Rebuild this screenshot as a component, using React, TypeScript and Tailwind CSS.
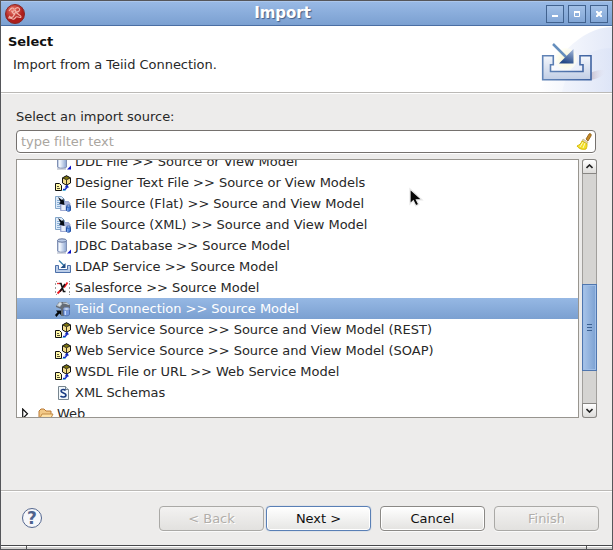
import React from "react";

type IconName = "db" | "web" | "file" | "ldap" | "sales" | "teiid" | "schema";

function DbIcon() {
  return (
    <svg width="16" height="16" viewBox="0 0 16 16">
      <path d="M2.500 2.500v10.500c0 1.600 9 1.600 9 0V2.500" fill="url(#cyl)" stroke="#8090b4" />
      <ellipse cx="7" cy="2.500" rx="4.500" ry="1.700" fill="#b9cae6" stroke="#66759b" />
      <path d="M4.500 5v8" stroke="#f3f7fd" />
      <path d="M2 15h9" stroke="#a5adc0" />
      <path d="M16 11.500v4h-4z" fill="#0b12c4" />
    </svg>
  );
}

function WebIcon() {
  return (
    <svg width="16" height="16" viewBox="0 0 16 16">
      <path d="M7.500 3 11.500.7 15.500 3v5L11.500 10.200 7.500 8z" fill="#f2dc8c" stroke="#111" />
      <path d="M7.500 2.900 11.500 1l4 1.900-4 1.800z" fill="#7c7408" stroke="#222" strokeWidth=".9" />
      <path d="M11.500 5v5" stroke="#3b3417" />
      <path d="M.5 8.500h4l2 2v5h-6z" fill="#fff8a8" stroke="#111" />
      <path d="M2 11.500h2M2 13.500h3" stroke="#555037" />
      <path d="M8 14.500h2l2-2v-2" fill="none" stroke="#1630c8" strokeWidth="1.400" />
      <path d="m9.500 12.500 2.500-3 2 3z" fill="#1025b8" />
      <path d="M7.500 15.500h3" stroke="#56b6dc" />
    </svg>
  );
}

function FileIcon() {
  return (
    <svg width="16" height="16" viewBox="0 0 16 16">
      <path d="M.5.500h6l3 3v9h-9z" fill="#dceafa" stroke="#82a5c8" />
      <path d="M2 4.500h5M2 6.500h5M2 8.500h5M2 10.500h4" stroke="#86add3" />
      <path d="m5.500 8 2-2.500h6l1.500 2v7H5.500z" fill="#a9b4dc" stroke="#8794c4" strokeWidth=".7" />
      <path d="M6.500 9h4v5h-4z" fill="#e9eefa" />
      <path d="m3 1 4 3 1.500-1.500L9.500 9 4 7.500 5.500 6z" fill="#080d16" />
      <path d="M11.500 10v4.300c0 1.200 4 1.200 4 0V10" fill="#477ad2" stroke="#2452a6" />
      <ellipse cx="13.500" cy="10" rx="2" ry="1" fill="#b9d2f5" stroke="#3d64ae" />
      <path d="M12.800 12v3" stroke="#8cb4f0" />
    </svg>
  );
}

function LdapIcon() {
  return (
    <svg width="16" height="16" viewBox="0 0 16 16">
      <path d="M.5 6.500h3v4h9v-4h3v7H.5z" fill="#bbcde8" stroke="#4c70a9" />
      <path d="m4 1.500 5 5" stroke="#337dab" strokeWidth="1.200" />
      <path d="M10.500 4v5h-5z" fill="#224e86" />
    </svg>
  );
}

function SalesIcon() {
  return (
    <svg width="16" height="16" viewBox="0 0 16 16">
      <path d="M1 1.500h1M14 1.500h1M1 14.500h1M14 14.500h1M.5 3v2M.5 7v2M.5 11v2M14.500 3v2M14.500 7v2M14.500 11v2" stroke="#9a9a9a" />
      <path d="M12.500 2.500 9 7.500M6.500 9.500l-4 4" fill="none" stroke="#f01820" strokeWidth="1.800" />
      <path d="M2 3.500h3" stroke="#f32b30" strokeWidth="1.300" />
      <path d="M4.500 3.500h1.500l2.500 8h2M10 4 5 11.500" fill="none" stroke="#151515" strokeWidth="1.600" />
    </svg>
  );
}

function TeiidIcon() {
  return (
    <svg width="16" height="16" viewBox="0 0 16 16">
      <path d="m1 5 3-4h7l4 3v5h-3V7H9v8H6V8L1 6z" fill="#656c76" />
      <path d="M2 4.500 5 1l2 1.500L5 5.500zm6-2.500h4l2 2" fill="#dce4ea" stroke="#b3bdc4" />
      <path d="M8.500 8v5c0 2.400 6 2.400 6 0V8" fill="#7497dd" stroke="#506fae" />
      <ellipse cx="11.500" cy="8" rx="3" ry="1.400" fill="#c8d9f2" stroke="#7390c8" />
      <path d="M10.300 10v4" stroke="#ccdfff" strokeWidth="1.300" />
      <path d="m0 14 2.500-2.700L1 9.500h5V14l-1.700-1.500L1.500 16z" fill="#050708" />
    </svg>
  );
}

function SchemaIcon() {
  return (
    <svg width="16" height="16" viewBox="0 0 16 16">
      <path d="M3.500 1.500h7l3 3v10h-10z" fill="#f2f8fc" stroke="#77858f" />
      <path d="M10.500 1.500v3h3" fill="#d4e2e8" stroke="#77858f" />
      <path d="M10.500 5.500c-1-1.500-4.500-1.500-4.500.500 0 2.300 5 1.600 5 4 0 2.500-4 2.500-5.500 1" fill="none" stroke="#183a81" strokeWidth="1.600" />
    </svg>
  );
}

const icons: Record<IconName, () => React.JSX.Element> = {
  db: DbIcon, web: WebIcon, file: FileIcon, ldap: LdapIcon,
  sales: SalesIcon, teiid: TeiidIcon, schema: SchemaIcon,
};

const rows: { icon: IconName; label: string; selected?: boolean }[] = [
  { icon: "db", label: "DDL File >> Source or View Model" },
  { icon: "web", label: "Designer Text File >> Source or View Models" },
  { icon: "file", label: "File Source (Flat) >> Source and View Model" },
  { icon: "file", label: "File Source (XML) >> Source and View Model" },
  { icon: "db", label: "JDBC Database >> Source Model" },
  { icon: "ldap", label: "LDAP Service >> Source Model" },
  { icon: "sales", label: "Salesforce >> Source Model" },
  { icon: "teiid", label: "Teiid Connection >> Source Model", selected: true },
  { icon: "web", label: "Web Service Source >> Source and View Model (REST)" },
  { icon: "web", label: "Web Service Source >> Source and View Model (SOAP)" },
  { icon: "web", label: "WSDL File or URL >> Web Service Model" },
  { icon: "schema", label: "XML Schemas" },
];

function TitleBar() {
  const box = "flex h-[18px] w-[18px] items-center justify-center border border-[#41628f] bg-linear-to-b from-[#a2c0e7] to-[#82a6d6]";
  return (
    <div className="flex h-[25px] shrink-0 items-center border-t border-b border-t-[#abc6eb] border-b-[#4a6ea3] bg-linear-to-b from-[#98b9e5] to-[#7ba0d1] pl-1 pr-1">
      <svg width="20" height="20" viewBox="0 0 20 20">
        <circle cx="10" cy="10" r="9.500" fill="url(#ball)" stroke="#892725" />
        <path d="M4 7c2-3 4-4 5-2s-1 3-3 2m4-2c3-3 6 0 4 2s-5 0-3-1M4 12c2 2 4 2 5-1s2-3 4-1 3 1 3 3M3 14c3-1 4 2 6 1s1-3 4-2 3 0 3 0M7 8l3 3" fill="none" stroke="#f2b5aa" strokeWidth="1.100" />
      </svg>
      <div className="flex-1 pr-[6px] pb-[2px] text-center text-[15px] leading-[20px] font-bold text-white [text-shadow:1px_1px_1px_#465f86]">Import</div>
      <div className="flex gap-1">
        <div className={box}><svg width="6" height="6"><path d="M0 5h6" stroke="#fff" strokeWidth="2" /></svg></div>
        <div className={box}><svg width="6" height="6"><path d="M.5 1h5v4.500h-5z" fill="none" stroke="#fff" /><path d="M0 1h6" stroke="#fff" strokeWidth="2" /></svg></div>
        <div className={box}><svg width="6" height="6"><path d="m0 0 6 6M6 0 0 6" stroke="#fff" strokeWidth="2.200" /></svg></div>
      </div>
    </div>
  );
}

function ImportBanner() {
  return (
    <svg className="shrink-0" width="75" height="66" viewBox="0 0 75 66">
      <defs>
        <linearGradient id="wash" x1="0" x2="1"><stop stopColor="#fff" /><stop offset="1" stopColor="#e3e9f8" /></linearGradient>
        <radialGradient id="glow"><stop stopColor="#fbf7ca" /><stop offset="1" stopColor="#fffef3" stopOpacity=".6" /></radialGradient>
        <linearGradient id="wash2" x1="0" x2="1"><stop stopColor="#eef2fb" /><stop offset="1" stopColor="#dae2f6" /></linearGradient>
        <linearGradient id="shade"><stop stopColor="#bdb2c0" /><stop offset="1" stopColor="#e6e6f4" stopOpacity="0" /></linearGradient>
        <linearGradient id="tray" x1="0" y1="0" x2="0" y2="1"><stop stopColor="#f4f7fc" /><stop offset="1" stopColor="#c1cee5" /></linearGradient>
        <linearGradient id="head" x1="1" y1="0" x2=".6" y2="1"><stop stopColor="#a8bddd" /><stop offset="1" stopColor="#254988" /></linearGradient>
        <linearGradient id="edge" x1="0" x2="1"><stop stopColor="#6285b7" /><stop offset="1" stopColor="#3f63a1" /></linearGradient>
      </defs>
      <path d="M2 66C14 36 43 1 75 1v65z" fill="url(#wash)" />
      <path d="M25 66c7-32 29-44 50-44v44z" fill="url(#wash2)" opacity=".6" />
      <circle cx="29" cy="33" r="11" fill="url(#glow)" />
      <path d="M53 47c10-4 18-4 16-1S60 54 51 54z" fill="url(#shade)" />
      <path d="M5.700 29.700h10.600v9h-2.800v6.800h32.500v-6.800h-3v-9h11v24H5.700z" fill="url(#tray)" stroke="url(#edge)" strokeWidth="1.600" />
      <path d="m16 18 13 13" stroke="#668fbd" strokeWidth="2.500" />
      <path d="M36.500 23v14.500H22z" fill="url(#head)" />
    </svg>
  );
}

function Arrow({ down = false }: { down?: boolean }) {
  return (
    <div className={`flex h-[15px] shrink-0 items-center justify-center border border-[#888683] bg-linear-to-b from-white to-[#dddcda] ${down ? "rounded-b-[3px]" : "rounded-t-[3px]"}`}>
      <svg width="7" height="5"><path d={down ? "M.5 1 3.500 4l3-3" : "M.5 4l3-3 3 3"} fill="none" stroke="#222" strokeWidth="1.600" /></svg>
    </div>
  );
}

function Button({ label, kind = "normal" }: { label: string; kind?: "normal" | "primary" | "disabled" }) {
  const tone = {
    normal: "border-[#8b8986] from-white to-[#e3e2e0] text-[#101010] shadow-[0_1px_0_#fafafa,inset_0_0_0_1px_#fff]",
    primary: "border-[#597fb5] from-white to-[#e6e6e4] text-[#101010] shadow-[0_0_1px_#7296c7,inset_0_0_0_1px_#fff]",
    disabled: "border-[#aaa9a6] from-[#f3f2f1] to-[#e2e1df] text-[#b1aeaa] shadow-[0_1px_0_#fafafa] [text-shadow:1px_1px_0_#fff]",
  }[kind];
  return <div className={`flex h-[25px] w-[105px] items-center justify-center rounded-[4px] border bg-linear-to-b ${tone}`}>{label}</div>;
}

export default function App() {
  return (
    <div className="flex h-[550px] w-[613px] flex-col overflow-hidden border border-[#55565a] bg-[#edeceb] font-['DejaVu_Sans',sans-serif] text-[13px] leading-[21px] tracking-[-0.03px] text-[#282828]">
      <svg className="absolute h-0 w-0">
        <defs>
          <linearGradient id="cyl"><stop stopColor="#afc0dc" /><stop offset=".3" stopColor="#edf3fb" /><stop offset="1" stopColor="#8ba4d0" /></linearGradient>
          <radialGradient id="ball" cx=".4" cy=".3"><stop stopColor="#ea7768" /><stop offset="1" stopColor="#ad1e1c" /></radialGradient>
        </defs>
      </svg>
      <TitleBar />
      <header className="flex h-[68px] shrink-0 justify-between border-b border-b-white bg-white shadow-[inset_0_-1px_0_#bbb9b6]">
        <div className="pl-[7px] pt-[5px]">
          <div className="font-bold text-[#111]">Select</div>
          <div className="mt-[2px] pl-[5px]">Import from a Teiid Connection.</div>
        </div>
        <ImportBanner />
      </header>
      <main className="flex h-[396px] shrink-0 flex-col px-[15px] pt-[12px]">
        <div className="h-[24px]">Select an import source:</div>
        <div className="flex h-[23px] w-[580px] shrink-0 items-center justify-between rounded-[4px] border border-[#75716e] bg-white pl-1 pr-[3px] text-[#aaa69f] shadow-[0_1px_0_#fff]">
          <span>type filter text</span>
          <svg width="16" height="17" viewBox="0 0 16 17">
            <path d="m10 6 3-5c1-1 3 0 2 2l-3 5z" fill="#c68a24" stroke="#8a5b18" strokeWidth=".8" />
            <path d="m7 6 5 3-1 2-5-3z" fill="#e3d4a3" stroke="#b9a064" strokeWidth=".5" />
            <path d="M6 8c-1 3-3 4-5 5 2 3 6 4 9 3 1-2 1-3 1-5z" fill="#f3df28" stroke="#d4b90d" />
            <path d="m7 9-3 5m5-4-2 5" stroke="#fffac0" />
          </svg>
        </div>
        <div className="mt-[6px] flex h-[259px] gap-[3px]">
          <div className="w-[563px] overflow-hidden border border-[#98958f] bg-white">
            <div className="-mt-[9px]">
              {rows.map((row) => {
                const Icon = icons[row.icon];
                return (
                  <div key={row.label} className={`flex h-[21px] items-center pl-[38px] ${row.selected ? "bg-linear-to-b from-[#96b8e4] to-[#7ba0d1] text-white" : ""}`}>
                    <Icon />
                    <span className="pl-1 whitespace-nowrap">{row.label}</span>
                  </div>
                );
              })}
              <div className="flex h-[21px] items-center pl-[5px]">
                <svg width="7" height="12"><path d="M.7 1v9.500L5.500 5.700z" fill="#fff" stroke="#111" strokeWidth="1.200" /></svg>
                <svg className="ml-[9px]" width="16" height="16" viewBox="0 0 16 16">
                  <path d="M1 14V5l2-2h3l2 2h5v9z" fill="#f2c987" stroke="#b87834" />
                  <path d="m1 14 3-6h11l-3 6z" fill="#ffe2a7" stroke="#c28a45" />
                </svg>
                <span className="pl-[3px]">Web</span>
              </div>
            </div>
          </div>
          <div className="flex w-[15px] flex-col rounded-[3px] border-x border-[#a19f9c] bg-[#d5d4d2]">
            <div className="-mx-px"><Arrow /></div>
            <div className="h-[110px]" />
            <div className="-mx-px flex h-[87px] flex-col items-center justify-center gap-[2px] border border-[#4f76ae] bg-linear-to-r from-[#a8c4e9] to-[#7ca1d2] shadow-[inset_0_0_0_1px_#9fbee7]">
              <div className="h-px w-[5px] bg-[#3c6192]" />
              <div className="h-px w-[5px] bg-[#3c6192]" />
              <div className="h-px w-[5px] bg-[#3c6192]" />
            </div>
            <div className="flex-1" />
            <div className="-mx-px"><Arrow down /></div>
          </div>
        </div>
      </main>
      <footer className="flex h-[55px] shrink-0 items-center border-t border-[#bbb9b6] pl-[21px] shadow-[inset_0_1px_0_#fff]">
        <div className="flex h-5 w-5 items-center justify-center rounded-full border border-[#54678f] bg-[#f6f7fa] text-[17px] font-bold leading-[20px] text-[#4e628d]">?</div>
        <div className="ml-[117px] flex gap-[2px]"><Button label="< Back" kind="disabled" /><Button label="Next >" kind="primary" /></div>
        <div className="ml-[9px] flex gap-[9px]"><Button label="Cancel" /><Button label="Finish" kind="disabled" /></div>
      </footer>
      <div className="flex h-1 shrink-0 border-t border-[#47484b] bg-[#d1d0cf] shadow-[inset_0_1px_0_#fff]">
        <div className="w-[26px] border-r border-[#555]" /><div className="w-[560px] border-r border-[#555]" />
      </div>
      <svg className="pointer-events-none absolute left-[408px] top-[187px]" width="16" height="22" viewBox="0 0 16 22">
        <path d="M2 2v15l3.300-3.200 2.500 5 3-1.400-2.300-4.600H14z" fill="#080808" stroke="#e8e8e8" strokeWidth="1.300" />
      </svg>
    </div>
  );
}
